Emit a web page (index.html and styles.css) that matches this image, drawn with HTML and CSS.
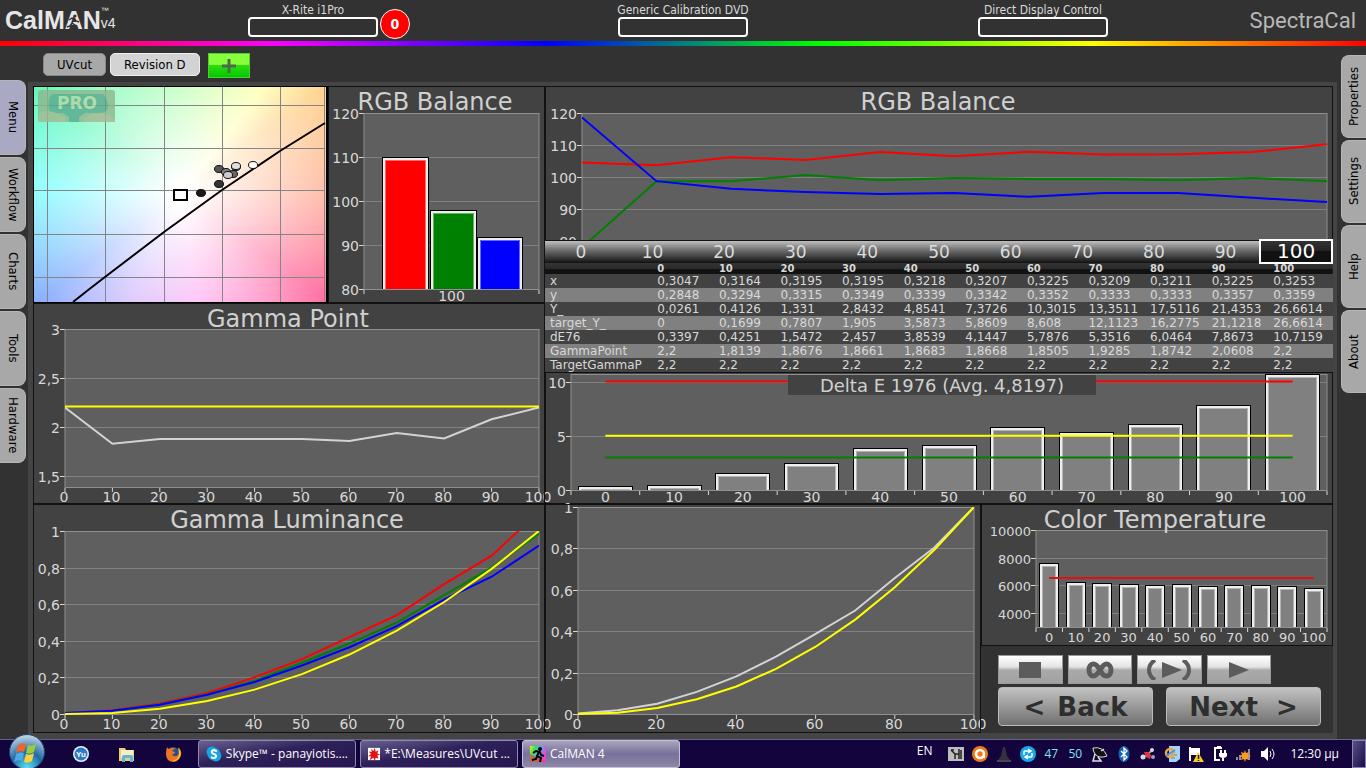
FILE: index.html
```
<!DOCTYPE html>
<html lang="en">
<head>
    <meta charset="UTF-8">
    <meta name="viewport" content="width=device-width, initial-scale=1.0">
    <title>CalMAN 4</title>
    <link rel="stylesheet" href="styles.css">
</head>
<body>
    <header class="top-bar">
        <div class="logo">
            <span class="logo-name">CalMAN</span>
            <svg class="runner" width="16" height="18" viewBox="0 0 16 18"><circle cx="9" cy="4" r="1.500"/><path d="M3 8l3-2 3 1 1 2 3 1M8 7l-2 4 3 2-1 4M6 11l-2 3-3 1" fill="none" stroke="#323232" stroke-width="1.500"/></svg>
            <span class="logo-side"><small>™</small><span>v4</span></span>
        </div>
        <div class="device">
            <span class="device-name">X-Rite i1Pro</span>
            <button class="device-box" aria-label="X-Rite i1Pro"></button>
            <span class="device-badge">0</span>
        </div>
        <div class="device">
            <span class="device-name">Generic Calibration DVD</span>
            <button class="device-box" aria-label="Generic Calibration DVD"></button>
        </div>
        <div class="device">
            <span class="device-name">Direct Display Control</span>
            <button class="device-box" aria-label="Direct Display Control"></button>
        </div>
        <div class="brand">SpectraCal</div>
    </header>
    <div class="rainbow"></div>

    <div class="body-row">
        <nav class="side side-left">
            <button class="side-tab active">Menu</button>
            <button class="side-tab">Workflow</button>
            <button class="side-tab">Charts</button>
            <button class="side-tab">Tools</button>
            <button class="side-tab">Hardware</button>
        </nav>

        <main class="center">
            <div class="doc-tabs">
                <button class="doc-tab">UVcut</button>
                <button class="doc-tab active">Revision D</button>
                <button class="add-tab" aria-label="Add">
                    <svg width="16" height="16" viewBox="0 0 16 16"><path d="M8 1v14M1 8h14" stroke="#4c6a4c" stroke-width="3"/></svg>
                </button>
            </div>

            <div class="frame">
                <div class="upper">
                    <div class="upper-left">
                        <div class="pair">
                            <svg class="panel cie" viewBox="0 0 295 217">
                                <path d="M14.5 1V216M72.5 1V216M131.5 1V216M189.5 1V216M247.5 1V216M291.5 1V216M1 19.5H292M1 62.5H292M1 104.5H292M1 148.5H292M1 191.5H292" stroke="#858585" fill="none"/>
                                <g opacity=".8">
                                    <rect x="5" y="4" width="77" height="32" rx="3" fill="#8fb68c"/>
                                    <path d="M19 8h51q5 6 5 11q0 8-8 8H52l-6 4v5H36v-5l-6-4H17q-4-12 2-19z" fill="#5aa78e"/>
                                    <path d="M5 28q10-6 20 0l8 4v4H7q-2 0-2-2zM50 33l12-6q12-1 20 6v3H50z" fill="#a3b78f"/>
                                    <text class="pro" x="44" y="23">PRO</text>
                                </g>
                                <path d="M40 216Q55 204 72 191L131 146L189 104L247 65L292 37" stroke="#000" stroke-width="2" fill="none"/>
                                <rect x="141" y="104" width="13" height="10" fill="#fff" stroke="#000" stroke-width="2"/>
                                <g stroke="#111" id="cie-dots"></g>
                                <path d="M0 .5H295M.5 0V217M0 216.5H295" stroke="#000" fill="none"/>
                                <rect x="293" width="2" height="217"/>
                            </svg>
                            <svg class="panel" id="rgb-bars" viewBox="0 0 217 217"></svg>
                        </div>
                        <svg class="panel spill" id="gamma-point" viewBox="0 0 512 201"></svg>
                    </div>
                    <div class="upper-right">
                        <svg class="panel" id="rgb-lines" viewBox="0 0 788 155"></svg>
                        <div class="levels" id="levels"></div>
                        <table class="readings" id="readings"></table>
                        <svg class="panel" id="delta-e" viewBox="0 0 788 132"></svg>
                    </div>
                </div>
                <div class="lower">
                    <svg class="panel spill" id="gamma-lum" viewBox="0 0 512 229"></svg>
                    <svg class="panel spill" id="luminance" viewBox="0 0 436 229"></svg>
                    <div class="lower-right">
                        <svg class="panel" id="color-temp" viewBox="0 0 352 142"></svg>
                        <div class="controls">
                            <div class="media">
                                <button aria-label="Stop"><svg width="22" height="16" viewBox="0 0 22 16"><path d="M0 0h22v16H0z"/></svg></button>
                                <button aria-label="Loop"><svg width="28" height="18" viewBox="0 0 28 18"><path d="M14 9C11 4 9.500 3 7.500 3C4.500 3 3 5.500 3 9s1.500 6 4.500 6C10 15 11.500 13 14 9c2.500-4 4-6 6.500-6S25 5.500 25 9s-1.500 6-4.500 6S17 14 14 9z" fill="none" stroke="#5c5c5c" stroke-width="5"/></svg></button>
                                <button aria-label="Play once"><svg width="46" height="20" viewBox="0 0 46 20"><path d="M16 2l20 8-20 8z"/><path d="M9 0Q3 4 3 10t6 10M37 0q6 4 6 10t-6 10" fill="none" stroke="#5c5c5c" stroke-width="4"/></svg></button>
                                <button aria-label="Play"><svg width="20" height="16" viewBox="0 0 20 16"><path d="M0 0l20 8-20 8z"/></svg></button>
                            </div>
                            <div class="steps">
                                <button><span>&lt;</span><span>Back</span></button>
                                <button class="next"><span>Next</span><span>&gt;</span></button>
                            </div>
                        </div>
                    </div>
                </div>
            </div>
        </main>

        <nav class="side side-right">
            <button class="side-tab">Properties</button>
            <button class="side-tab">Settings</button>
            <button class="side-tab">Help</button>
            <button class="side-tab">About</button>
        </nav>
    </div>

    <footer class="taskbar">
        <button class="start" aria-label="Start">
            <svg width="38" height="38" viewBox="0 0 38 38">
                <defs><radialGradient id="orb" cx=".5" cy=".95" r=".9"><stop offset="0" stop-color="#5fe0f5"/><stop offset=".5" stop-color="#1f6aa5"/><stop offset="1" stop-color="#b7cfe0"/></radialGradient></defs>
                <circle cx="19" cy="19" r="17.500" fill="url(#orb)" stroke="#20436a"/>
                <path d="M10 12q4-3 8-1l-2 8q-4-2-8 1z" fill="#f0642d"/>
                <path d="M20 12q4 2 8-1l-2 8q-4 3-8 1z" fill="#9ccb3b"/>
                <path d="M8 21q4-3 8-1l-2 8q-4-2-8 1z" fill="#4fa9e8"/>
                <path d="M18 21q4 2 8-1l-2 8q-4 3-8 1z" fill="#fdd23c"/>
            </svg>
        </button>
        <div class="pinned">
            <button aria-label="Yu"><svg width="18" height="18" viewBox="0 0 18 18"><circle cx="9" cy="9" r="8" fill="#e8f0f8"/><circle cx="9" cy="9" r="6.500" fill="#2b7cc4"/><text class="yu" x="9" y="12">Yu</text></svg></button>
            <button aria-label="Explorer"><svg width="18" height="18" viewBox="0 0 18 18"><path d="M1 3h6l1 2h8v11H1z" fill="#e8cf7c"/><path d="M3 5h12v8H3z" fill="#f8efc0"/><path d="M4 17v-5q0-2 2-2h7q2 0 2 2v5h-3v-4H7v4z" fill="#62b4dc"/></svg></button>
            <button aria-label="Firefox"><svg width="18" height="18" viewBox="0 0 18 18"><circle cx="9" cy="9" r="7" fill="#24508f"/><path d="M3 2q1 2 2 2 4-2 7 0-3 0-4 2l3 1q0 2-3 2 2 4 6 1 2-3 0-8 4 3 3 8-2 7-8 7-7-1-7-8 0-4 1-7z" fill="#ee7420"/><path d="M14 3q4 4 2 9-3 5-8 4 6-1 7-6 0-4-1-7z" fill="#fdc63a"/></svg></button>
        </div>
        <div class="windows">
            <button class="window"><svg width="16" height="16" viewBox="0 0 16 16"><circle cx="6" cy="6" r="5.500" fill="#12a5e8"/><circle cx="10" cy="10" r="5.500" fill="#12a5e8"/><circle cx="8" cy="8" r="6.500" fill="#12a5e8"/><path d="M11 5.500Q8 3 6 5q-1 2 2 3t2 3q-2 2-5 0" stroke="#fff" stroke-width="2" fill="none"/></svg><span>Skype™ - panayiotis....</span></button>
            <button class="window"><svg width="16" height="16" viewBox="0 0 16 16"><path d="M0 0h16v16H0z" fill="#fff"/><path d="M4 1l3 3 2-4 1 5 4-2-2 4 4 2-4 1 2 4-4-1-1 4-2-4-5 3 2-5-4 0 4-3-3-3 4 0z" fill="#e01414"/></svg><span>*E:\Measures\UVcut ...</span></button>
            <button class="window active"><svg width="16" height="16" viewBox="0 0 16 16"><defs><linearGradient id="hue" x2="1" y2=".4"><stop stop-color="#f8e820"/><stop offset=".3" stop-color="#38e050"/><stop offset=".6" stop-color="#48b8f8"/><stop offset="1" stop-color="#f040d0"/></linearGradient></defs><path d="M0 0h16v16H0z" fill="url(#hue)"/><path d="M0 8l16 8H0z" fill="#f4422c" opacity=".7"/><circle cx="10" cy="3" r="2"/><path d="M3 7l3-2 4 1 1 3 3 1M9 6L7 10l4 2-1 4M7 10l-1 3-4 1" stroke="#000" stroke-width="2" fill="none"/></svg><span>CalMAN 4</span></button>
        </div>
        <div class="tray">
            <span class="lang">EN</span>
            <svg viewBox="0 0 16 16"><path d="M0 1h16v14H0z" fill="#bdbdbd"/><path d="M3 4l4 4v5M7 8h4M11 3v10M13 4v9M3 4h3" stroke="#222" stroke-width="1.500" fill="none"/></svg>
            <svg viewBox="0 0 16 16"><circle cx="8" cy="8" r="8" fill="#f07818"/><circle cx="8" cy="8" r="4" fill="none" stroke="#fff" stroke-width="2.500"/><path d="M12 6v6" stroke="#fff" stroke-width="2"/></svg>
            <svg viewBox="0 0 16 16"><path d="M7 1h2l2 9 3 4H2l3-4z" fill="#34313c"/><path d="M1 15h14" stroke="#4a4752" stroke-width="2"/></svg>
            <svg viewBox="0 0 16 16"><circle cx="8" cy="8" r="8" fill="#18a6e4"/><path d="M4 9V6q0-1 1-1h5M8 3l3 2-3 2M12 7v3q0 1-1 1H6M8 9l-3 2 3 2" stroke="#fff" stroke-width="1.500" fill="none"/></svg>
            <span class="temp">47</span>
            <span class="temp">50</span>
            <svg viewBox="0 0 16 16"><path d="M1 2q10-2 14 8-8 3-12-2-2-3-2-6z" fill="#111" stroke="#ddd"/><path d="M3 8l-2 7h8l-3-4M9 5l3-2" stroke="#ddd" stroke-width="1.500" fill="none"/></svg>
            <svg viewBox="0 0 16 16"><ellipse cx="8" cy="8" rx="5.500" ry="8" fill="#1462ac"/><path d="M5 5l6 6-3 3V2l3 3-6 6" stroke="#fff" stroke-width="1.300" fill="none"/></svg>
            <svg viewBox="0 0 16 16"><path d="M2 12L13 4" stroke="#999" stroke-width="2"/><path d="M4 6l4 0 3 3-1 4-4-2z" fill="#e03838"/><circle cx="12" cy="4" r="2" fill="#d8d8e8"/><circle cx="3" cy="11" r="2.500" fill="#d8d8e8"/><circle cx="13" cy="11" r="2" fill="#9aa0d0"/></svg>
            <svg viewBox="0 0 16 16"><path d="M5 0h11v13l-4 3H5z" fill="#a9d3f2"/><path d="M7 9h6M7 12h4" stroke="#4a86c0"/><circle cx="6" cy="7" r="4" fill="none" stroke="#f2a53a" stroke-width="2.500"/><path d="M2 10l9-6" stroke="#4c94d8" stroke-width="2"/></svg>
            <svg viewBox="0 0 16 16"><path d="M2 1v14" stroke="#fff" stroke-width="2"/><path d="M3 2h9v7H3z" fill="#fff"/><path d="M10 6l6 10H5z" fill="#f6cb2d"/><path d="M10.500 9v4M10.500 14v1" stroke="#222" stroke-width="1.500"/></svg>
            <svg viewBox="0 0 16 16"><path d="M10 2H3v12h5M5 1h4" stroke="#fff" stroke-width="2" fill="none"/><path d="M7 7h8v3q-1 2-4 2t-4-2z" fill="#fff"/><path d="M9 4v3M13 4v3M11 12v3" stroke="#fff" stroke-width="2" fill="none"/></svg>
            <svg viewBox="0 0 16 16"><path d="M0 14v-3h2v3zM3 14V9h2v5zM12 14V3h2v11z" fill="#8c90b0"/><path d="M9 4l1 3 3-1-1 3 3 1-3 1 1 3-3-1-1 3-1-3-3 1 1-3-3-1 3-1-1-3 3 1z" fill="#f79c1c"/></svg>
            <svg viewBox="0 0 16 16"><path d="M1 5h3l4-4v14l-4-4H1z" fill="#fff"/><path d="M10 5q2 3 0 6M12 3q4 5 0 10" stroke="#fff" fill="none"/></svg>
        </div>
        <time class="clock">12:30 μμ</time>
        <button class="show-desktop" aria-label="Show desktop"></button>
    </footer>
    <script src="charts.js"></script>
</body>
</html>
```
FILE: styles.css
```
* {
    box-sizing: border-box;
}
body {
    margin: 0;
    min-height: 100vh;
    display: flex;
    flex-direction: column;
    background: #323232;
    color: #d8d8d8;
    font-family: "DejaVu Sans", Verdana, sans-serif;
}
button {
    font-family: inherit;
    margin: 0;
    padding: 0;
    border: none;
    cursor: pointer;
}
svg {
    display: block;
}

/* header */
.top-bar {
    display: grid;
    grid-template-columns: 128fr 370fr 370fr 350fr 148fr;
    height: 41px;
}
.logo {
    position: relative;
    display: flex;
    align-items: flex-start;
    padding: 6px 0 0 5px;
    color: #e6e6e6;
}
.logo-name {
    font: bold 25px/28px "Liberation Sans", Arial, sans-serif;
}
.runner {
    position: absolute;
    left: 66px;
    top: 12px;
    fill: #323232;
}
.logo-side {
    display: flex;
    flex-direction: column;
    font: 14px/14px "Liberation Sans", Arial, sans-serif;
}
.logo-side small {
    font-size: 8px;
    line-height: 10px;
}
.device {
    position: relative;
    display: flex;
    flex-direction: column;
    align-items: center;
    padding-top: 4px;
}
.device-name {
    font: 12px/13px "DejaVu Sans Condensed", "DejaVu Sans", sans-serif;
}
.device-box {
    width: 130px;
    height: 20px;
    border: 2px solid #fff;
    border-radius: 4px;
    background: transparent;
}
.device-badge {
    position: absolute;
    left: calc(50% + 67px);
    top: 9px;
    width: 30px;
    height: 30px;
    border: 1px solid #fff;
    border-radius: 50%;
    background: #f00;
    color: #fff;
    font: bold 14px/28px "DejaVu Sans Condensed", sans-serif;
    text-align: center;
}
.brand {
    padding: 8px 10px 0 0;
    text-align: right;
    color: #b8b8b8;
    font: 22px/26px Roboto, sans-serif;
}
.rainbow {
    height: 5px;
    background: linear-gradient(to right, #f00, #f0f 20%, #00f 40%, #0f0 60%, #ff0 80%, #f00);
}

/* side tabs */
.body-row {
    display: flex;
    flex: 1;
}
.side {
    display: flex;
    flex-direction: column;
    gap: 2px;
}
.side-left {
    width: 28px;
    padding: 34px 2px 0 0;
}
.side-right {
    width: 29px;
    padding: 9px 0 0 4px;
}
.side-tab {
    height: 75px;
    background: #a8a8a8;
    border: 1px solid #b6b6b6;
    border-left: none;
    border-radius: 0 8px 8px 0;
    color: #000;
    font: 13px/22px "DejaVu Sans Condensed", "DejaVu Sans", sans-serif;
    writing-mode: vertical-rl;
}
.side-tab.active {
    background: #a9a9c4;
}
.side-right .side-tab {
    height: 83px;
    transform: rotate(180deg);
}

/* document tabs */
.center {
    flex: 1;
    min-width: 0;
}
.doc-tabs {
    display: flex;
    gap: 4px;
    height: 36px;
    padding: 7px 0 0 15px;
}
.doc-tab {
    height: 23px;
    padding: 0 13px;
    border: 1px solid #888;
    border-radius: 5px;
    background: #a8a8a8;
    color: #000;
    font: 13px/20px "DejaVu Sans Condensed", "DejaVu Sans", sans-serif;
}
.doc-tab.active {
    background: #d3d3d3;
    border-color: #eee;
}
.add-tab {
    width: 42px;
    height: 25px;
    margin-left: 4px;
    display: flex;
    align-items: center;
    justify-content: center;
    border: 1px solid #4fd030;
    background: linear-gradient(#86ff3c 45%, #30dc10 50%, #00c800);
}

/* workspace */
.frame {
    padding: 4px 4px 6px 5px;
    background: #444;
}
.upper,
.lower {
    display: grid;
    align-items: start;
}
.upper {
    grid-template-columns: 512fr 788fr;
}
.lower {
    grid-template-columns: 512fr 436fr 352fr;
    background: #323232;
}
.pair {
    display: grid;
    grid-template-columns: 295fr 217fr;
}
.panel {
    width: 100%;
    background: #424242;
}
.spill {
    position: relative;
    overflow: visible;
}
#gamma-point,
#gamma-lum {
    z-index: 3;
}
#luminance {
    z-index: 2;
}
.cie {
    background:
        radial-gradient(circle at 50% 50%, #fff 5%, rgba(255, 255, 255, 0) 105%),
        conic-gradient(#a4ffa0, #ffffa0 38deg, #ffd088 53deg, #ffa890 90deg, #ff6498 125deg, #ff98f0 170deg, #c8a8ff 205deg, #80a8ff 233deg, #70ffff 272deg, #54f8b4 307deg, #a4ffa0);
}
.pro {
    font-size: 17px;
    font-weight: bold;
    fill: #b4d8a4;
    text-anchor: middle;
}
.title {
    font-size: 24px;
    fill: #d0d0d0;
    text-anchor: middle;
}
.title-small {
    font-size: 18px;
}
.axis-label {
    font-size: 14px;
    fill: #d8d8d8;
}
.axis-small {
    font-size: 13px;
}
.axis-x {
    text-anchor: middle;
}
.axis-y {
    text-anchor: end;
}

/* stimulus levels */
.levels {
    position: relative;
    z-index: 2;
    display: grid;
    grid-template-columns: repeat(11, 1fr);
    height: 22px;
    background: linear-gradient(#c0c0c0, #707070 40%, #222 90%, #111);
}
.levels button {
    background: none;
    color: #dcdcdc;
    font-size: 17px;
    line-height: 20px;
}
.levels button.active {
    height: 25px;
    margin: -2px 0 -1px -2px;
    border: 2px solid #fff;
    background: linear-gradient(#333, #222 50%, #111 50%);
    color: #fff;
    font-size: 20px;
    line-height: 21px;
}

/* readings table */
.readings {
    width: 100%;
    table-layout: fixed;
    border-collapse: collapse;
    background: #424242;
    font-size: 12px;
    line-height: 14px;
}
.readings th,
.readings td {
    padding: 0 0 0 2px;
    text-align: left;
    font-weight: normal;
    white-space: nowrap;
}
.readings th:first-child {
    width: 14%;
    padding-left: 5px;
}
.readings thead {
    background: linear-gradient(#333, #2a2a2a 50%, #111 60%);
}
.readings thead th {
    height: 11px;
    font-size: 10px;
    font-weight: bold;
    line-height: 11px;
}
.readings tbody tr:nth-child(even) {
    background: #808080;
}

/* controls */
.controls {
    padding: 9px 12px 0 17px;
}
.media {
    display: grid;
    grid-template-columns: repeat(4, 1fr);
    gap: 5px;
    margin: 0 50px 3px 0;
}
.media button {
    height: 29px;
    display: flex;
    align-items: center;
    justify-content: center;
    border: 1px solid #999;
    background: linear-gradient(#fff, #e4e4e4 40%, #aaa 52%, #a2a2a2);
    fill: #5c5c5c;
}
.steps {
    display: grid;
    grid-template-columns: 1fr 1fr;
    gap: 13px;
}
.steps button {
    display: flex;
    align-items: center;
    justify-content: center;
    gap: 12px;
    height: 39px;
    border: 1px solid #bbb;
    border-radius: 4px;
    background: linear-gradient(#c2c2c2, #999 50%, #707070);
    color: #2e2e2e;
    font-size: 26px;
    font-weight: bold;
}
.steps .next {
    gap: 18px;
}

/* taskbar */
.taskbar {
    display: flex;
    align-items: center;
    height: 29px;
    border-top: 1px solid #66608a;
    background: #14043e;
    color: #fff;
    font: 12px/16px "Open Sans", "Noto Sans", sans-serif;
}
.start {
    margin: -7px 0 -3px 8px;
    background: none;
}
.start,
.pinned,
.tray {
    position: relative;
    z-index: 4;
}
.pinned {
    display: flex;
    gap: 28px;
    padding: 0 16px 0 26px;
}
.pinned button {
    background: none;
}
.yu {
    font: bold 8px "Liberation Sans", sans-serif;
    fill: #fff;
    text-anchor: middle;
}
.windows {
    display: flex;
    gap: 4px;
    height: 28px;
    flex: 0 1 482px;
}
.window {
    flex: 1;
    min-width: 0;
    display: flex;
    align-items: center;
    gap: 4px;
    padding: 0 7px;
    border: 1px solid #8f8aa8;
    border-radius: 3px;
    background: linear-gradient(to bottom right, #6a6190, #2e2058 45%, #251650);
    color: #fff;
    font: inherit;
    white-space: nowrap;
}
.window.active {
    background: linear-gradient(#aaa4be, #77709a 50%, #8f88a8);
    border-color: #c4c0d4;
}
.tray {
    display: flex;
    align-items: center;
    gap: 8px;
    margin-left: auto;
}
.tray svg {
    width: 16px;
    height: 16px;
}
.lang {
    margin: 0 8px 6px 0;
}
.temp {
    width: 16px;
    color: #7fe4f0;
}
.clock {
    margin: 0 13px 0 14px;
    white-space: nowrap;
}
.show-desktop {
    width: 14px;
    height: 28px;
    border: 1px solid #8a86a8;
    background: linear-gradient(to bottom right, #5a5088, #1c0c48);
}
```
FILE: charts.js
```
const LEVELS = [0, 10, 20, 30, 40, 50, 60, 70, 80, 90, 100];

const READINGS = {
    'x': ['0,3047', '0,3164', '0,3195', '0,3195', '0,3218', '0,3207', '0,3225', '0,3209', '0,3211', '0,3225', '0,3253'],
    'y': ['0,2848', '0,3294', '0,3315', '0,3349', '0,3339', '0,3342', '0,3352', '0,3333', '0,3333', '0,3357', '0,3359'],
    'Y_': ['0,0261', '0,4126', '1,331', '2,8432', '4,8541', '7,3726', '10,3015', '13,3511', '17,5116', '21,4353', '26,6614'],
    'target_Y_': ['0', '0,1699', '0,7807', '1,905', '3,5873', '5,8609', '8,608', '12,1123', '16,2775', '21,1218', '26,6614'],
    'dE76': ['0,3397', '0,4251', '1,5472', '2,457', '3,8539', '4,1447', '5,7876', '5,3516', '6,0464', '7,8673', '10,7159'],
    'GammaPoint': ['2,2', '1,8139', '1,8676', '1,8661', '1,8683', '1,8668', '1,8505', '1,9285', '1,8742', '2,0608', '2,2'],
    'TargetGammaP': Array(11).fill('2,2')
};

function drawBar(x, y, w, bottom, color) {
    const h = bottom - y;
    let out = `<rect x="${x}" y="${y}" width="${w}" height="${h}" fill="#000"/>`;
    out += `<rect x="${x + 1}" y="${y + 1}" width="${w - 2}" height="${Math.max(h - 1, 0)}" fill="#eee"/>`;
    out += `<rect x="${x + 3}" y="${y + 3}" width="${w - 6}" height="${Math.max(h - 3, 0)}" fill="${color}"/>`;
    out += `<path d="M${x + 3.5} ${bottom}V${y + 3.5}H${x + w - 3.5}V${bottom}" fill="none" stroke="#fff" stroke-opacity=".4"/>`;
    return out;
}

// plot: [left, top, width, height] inside the svg's viewBox
function drawChart(id, opt) {
    const svg = document.getElementById(id);
    const box = svg.viewBox.baseVal;
    const [px, py, pw, ph] = opt.plot;
    const labels = opt.labels || LEVELS;
    const band = pw / labels.length;
    const labelGap = opt.labelGap || 15;
    const cls = 'axis-label ' + (opt.small ? 'axis-small ' : '');
    const yPos = v => ph * (opt.max - v) / (opt.max - opt.min);
    const xPos = i => opt.bars ? band * (i + 0.5) : pw * i / 10;
    let out = `<rect x="${px}" y="${py}" width="${pw}" height="${ph}" fill="#5f5f5f"/>`;

    opt.yTicks.forEach(v => {
        const y = Math.round(py + yPos(v)) + 0.5;
        out += `<path d="M${px} ${y}H${px + pw}" stroke="#808080"/>`;
        out += `<path d="M${px - 5} ${y}H${px}" stroke="#d8d8d8"/>`;
        out += `<text class="${cls}axis-y" x="${px - 5}" y="${y + 5}">${String(v).replace('.', ',')}</text>`;
    });
    out += `<rect x="${px}" y="${py + 0.5}" width="${pw}" height="${ph}" fill="none" stroke="#909090"/>`;

    // series are clipped to the plot area
    out += `<svg x="${px}" y="${py}" width="${pw}" height="${ph + 1}">`;
    (opt.bars || []).forEach((v, i) => {
        const w = opt.barWidth;
        const left = opt.barLeft ? opt.barLeft[i] : Math.round(xPos(i) - w / 2);
        out += drawBar(left, Math.round(yPos(v)), w, ph, opt.colors ? opt.colors[i] : '#808080');
    });
    (opt.limits || []).forEach(([v, color]) => {
        out += `<path d="M${band / 2} ${yPos(v)}H${pw - band / 2}" stroke="${color}" stroke-width="2"/>`;
    });
    (opt.lines || []).forEach(([color, values]) => {
        const pts = values.map((v, i) => `${xPos(i)},${yPos(v)}`).join(' ');
        out += `<polyline points="${pts}" fill="none" stroke="${color}" stroke-width="2"/>`;
    });
    out += '</svg>';

    if (!opt.noX) {
        const ticks = opt.bars ? labels.length : 10;
        const every = opt.xEvery || 1;
        for (let i = 0; i <= ticks; i += every) {
            out += `<path d="M${px + pw * i / ticks} ${py + ph + 1}v4" stroke="#d8d8d8"/>`;
        }
        for (let i = 0; i < labels.length; i += every) {
            const x = px + xPos(i) - (opt.bars ? 0 : 1);
            out += `<text class="${cls}axis-x" x="${x}" y="${py + ph + labelGap}">${labels[i]}</text>`;
        }
    }
    if (opt.titleBox) {
        const [bx, by, bw, bh] = opt.titleBox;
        out += `<rect x="${bx}" y="${by}" width="${bw}" height="${bh}" fill="#424242"/>`;
        out += `<text class="title title-small" x="${bx + bw / 2}" y="${by + 17}">${opt.title}</text>`;
    } else if (opt.title) {
        out += `<text class="title" x="${opt.titleX}" y="24">${opt.title}</text>`;
    }
    out += `<rect x=".5" y=".5" width="${box.width - 1}" height="${box.height - 1}" fill="none" stroke="#111"/>`;
    svg.innerHTML = out;
}

drawChart('rgb-bars', {
    plot: [36, 27, 175, 176], min: 80, max: 120, yTicks: [120, 110, 100, 90, 80],
    title: 'RGB Balance', titleX: 107, labels: [100], labelGap: 12,
    bars: [110], barWidth: 47, barLeft: [18], colors: ['#f00']
});
// green and blue share the single 100 band with red
document.querySelector('#rgb-bars svg').innerHTML +=
    drawBar(66, 97, 47, 176, '#008000') + drawBar(113, 124, 46, 176, '#00f');

drawChart('rgb-lines', {
    plot: [37, 27, 745, 128], min: 80, max: 120, yTicks: [120, 110, 100, 90, 80], noX: true,
    title: 'RGB Balance', titleX: 393,
    lines: [
        ['#f00', [104.5, 103.7, 106.2, 105.3, 107.8, 106.5, 107.9, 107, 107.1, 107.8, 110.2]],
        ['#008000', [78, 98.7, 98.7, 100.6, 99, 99.7, 99.4, 99.4, 99, 99.7, 98.7]],
        ['#00f', [118.6, 98.7, 96.3, 95.3, 94.7, 95, 93.8, 95, 95, 93.5, 92.2]]
    ]
});

drawChart('gamma-point', {
    plot: [32, 26, 474, 158], min: 1.39, max: 3, yTicks: [3, 2.5, 2, 1.5],
    title: 'Gamma Point', titleX: 255,
    lines: [
        ['#d3d3d3', [2.2, 1.83, 1.88, 1.88, 1.88, 1.88, 1.86, 1.94, 1.885, 2.08, 2.2]],
        ['#ff0', Array(11).fill(2.21)]
    ]
});

drawChart('delta-e', {
    plot: [26, 2, 756, 116], min: 0, max: 10.7, yTicks: [10, 5, 0],
    title: 'Delta E 1976 (Avg. 4,8197)', titleBox: [243, 3, 308, 20], labelGap: 12,
    bars: READINGS.dE76.map(v => parseFloat(v.replace(',', '.'))), barWidth: 55,
    limits: [[10, '#f00'], [5, '#ff0'], [3, '#008000']]
});

const target = [0, 0.006, 0.029, 0.071, 0.133, 0.218, 0.325, 0.456, 0.612, 0.793, 1];

drawChart('gamma-lum', {
    plot: [32, 27, 474, 183], min: 0, max: 1, yTicks: [1, 0.8, 0.6, 0.4, 0.2, 0],
    title: 'Gamma Luminance', titleX: 254,
    lines: [
        ['#f00', [0.005, 0.02, 0.058, 0.115, 0.2, 0.3, 0.42, 0.54, 0.71, 0.865, 1.105]],
        ['#008000', [0.005, 0.018, 0.053, 0.108, 0.182, 0.28, 0.385, 0.5, 0.65, 0.8, 0.985]],
        ['#00f', [0.005, 0.018, 0.05, 0.105, 0.175, 0.265, 0.365, 0.48, 0.625, 0.75, 0.92]],
        ['#ff0', target]
    ]
});

drawChart('luminance', {
    plot: [33, 3, 396, 207], min: 0, max: 1, yTicks: [1, 0.8, 0.6, 0.4, 0.2, 0], xEvery: 2,
    lines: [
        ['#d3d3d3', [0.003, 0.018, 0.05, 0.107, 0.182, 0.277, 0.387, 0.5, 0.657, 0.804, 1]],
        ['#ff0', target]
    ]
});

drawChart('color-temp', {
    plot: [55, 26, 291, 97], min: 3000, max: 10000, yTicks: [10000, 8000, 6000, 4000], small: true,
    title: 'Color Temperature', titleX: 174,
    bars: [7600, 6230, 6150, 6080, 6000, 6080, 5930, 6000, 6000, 5930, 5800], barWidth: 20,
    limits: [[6530, '#e01010']]
});

document.getElementById('cie-dots').innerHTML = [
    [186, 83, '#555'], [200, 88, '#666'], [193, 86, '#808080'], [203, 81, '#999'], [203, 80, '#e0e0e0'],
    [195, 89, '#ccc'], [220, 79, '#fff'], [186, 98, '#333'], [168, 107, '#1a1a1a']
].map(([x, y, c]) => `<ellipse cx="${x}" cy="${y}" rx="4.5" ry="3.5" fill="${c}"/>`).join('');

document.getElementById('levels').innerHTML =
    LEVELS.map(v => `<button${v === 100 ? ' class="active"' : ''}>${v}</button>`).join('');

document.getElementById('readings').innerHTML =
    '<thead><tr><th></th>' + LEVELS.map(v => `<th scope="col">${v}</th>`).join('') + '</tr></thead><tbody>' +
    Object.entries(READINGS).map(([name, row]) =>
        `<tr><th scope="row">${name}</th>` + row.map(v => `<td>${v}</td>`).join('') + '</tr>').join('') + '</tbody>';
```
